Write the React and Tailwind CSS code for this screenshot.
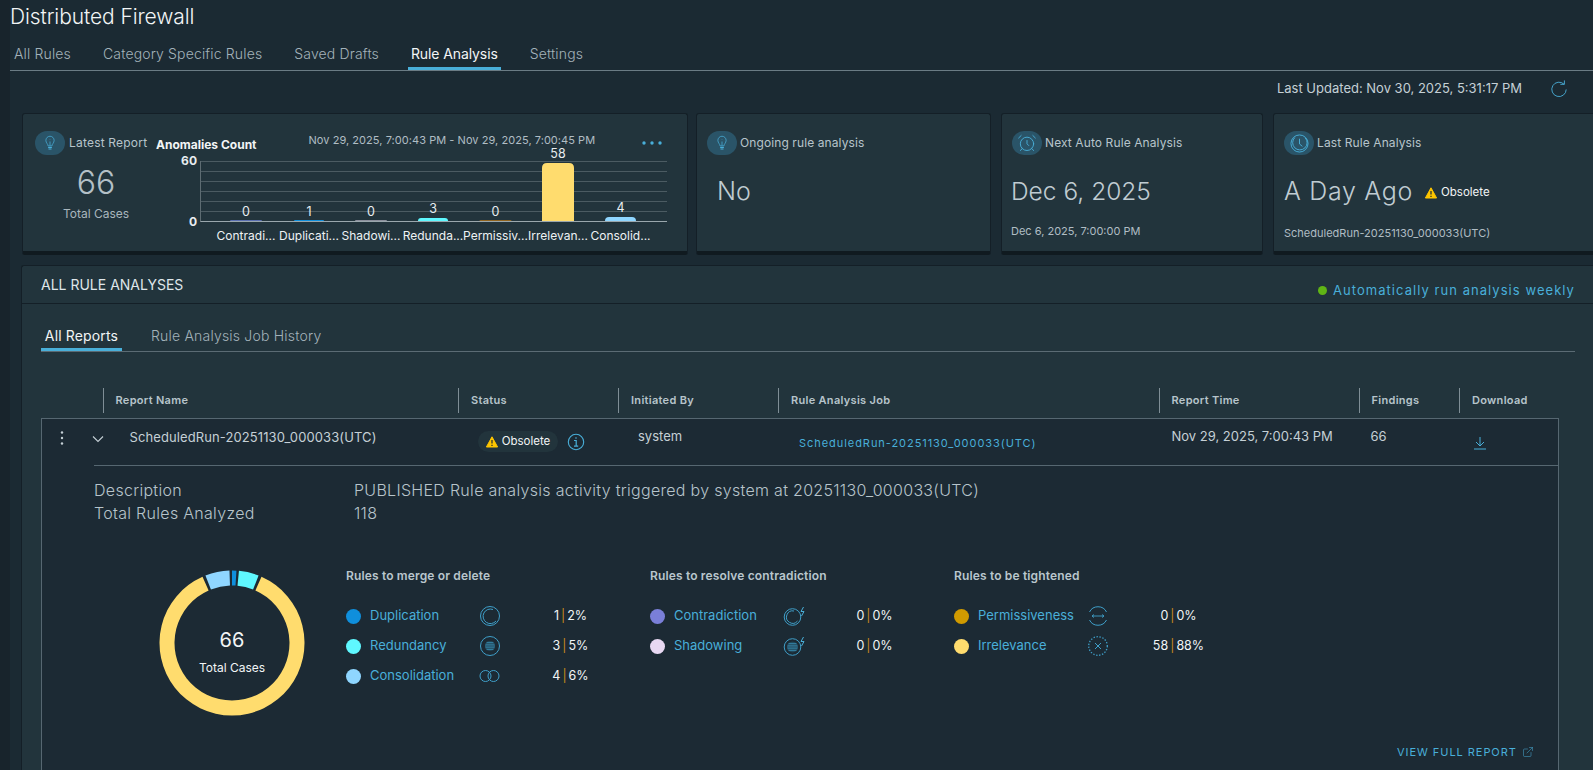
import React from 'react';
import { AlarmClock, ExternalLink } from 'lucide-react';

const BLUE = '#49afd9';

function Bulb({ className = '' }) {
  return (
    <svg viewBox="0 0 16 20" className={className} fill="none" stroke="currentColor" strokeWidth="1">
      <path d="M5.5 14 C5.5 11.5 2.5 10 2.5 6.5 A5.5 5.5 0 0 1 13.5 6.5 C13.5 10 10.5 11.5 10.5 14 Z" />
      <path d="M8 14 V8 M8 5.5 V6" />
      <path d="M5.5 16 H10.5 M6 18 H10" strokeWidth="1.6" />
    </svg>
  );
}
function ClockIcon({ className = '' }) {
  return (
    <svg viewBox="0 0 20 20" className={className} fill="none" stroke="currentColor" strokeWidth="1">
      <circle cx="10" cy="10" r="9" />
      <path d="M5 3.8 A7.6 7.6 0 1 0 16 4" />
      <path d="M10 5 V10.5 L13 13" />
    </svg>
  );
}
function IconBubble({ children }) {
  return (
    <div className="w-[30px] h-[24px] rounded-full bg-[#2a5468] flex items-center justify-center text-[#49afd9] shrink-0">
      {children}
    </div>
  );
}
function Warn({ className = '' }) {
  return (
    <svg viewBox="0 0 12 12" className={className}>
      <path d="M6 .8 L11.6 11 H.4 Z" fill="#fdc500" stroke="#fdc500" strokeLinejoin="round" />
      <path d="M6 4 V7.6 M6 8.8 V10" stroke="#1b2832" strokeWidth="1.2" />
    </svg>
  );
}

function Chart() {
  const cats = [
    ['Contradi...', 246, 0, '0', '#5a6fb0', 32],
    ['Duplicati...', 309, 1, '1', '#0f8fdc', 30],
    ['Shadowi...', 371, 0, '0', '#8b8f9c', 32],
    ['Redunda...', 433, 3, '3', '#5ff8ff', 30],
    ['Permissiv...', 495.5, 0, '0', '#8f6420', 32],
    ['Irrelevan...', 558, 58, '58', '#ffdc6e', 32],
    ['Consolid...', 620.5, 4, '4', '#8fd6ff', 31],
  ];
  return (
    <svg viewBox="155 138 530 107" className="w-[530px] h-[107px] block -mt-[12px]" fontFamily="Inter, sans-serif">
      {[161.5, 171.5, 181.5, 191.5, 201.5, 211.5].map((y) => (
        <line key={y} x1="200.5" x2="667" y1={y} y2={y} stroke="#4b5b62" strokeWidth="1" />
      ))}
      <line x1="200.5" x2="200.5" y1="161" y2="222" stroke="#5d6c72" strokeWidth="1" />
      <text x="197" y="165" textAnchor="end" fontSize="12" fontWeight="700" fill="#e8edf0">60</text>
      <text x="197" y="225.5" textAnchor="end" fontSize="12" fontWeight="700" fill="#e8edf0">0</text>
      {cats.map(([label, cx, v, t, color, w]) => {
        const h = Math.max(v, 1);
        const top = 221 - h;
        const r = Math.min(5, h);
        return (
          <g key={label}>
            <path
              d={`M${cx - w / 2} 221 V${top + r} Q${cx - w / 2} ${top} ${cx - w / 2 + r} ${top} H${cx + w / 2 - r} Q${cx + w / 2} ${top} ${cx + w / 2} ${top + r} V221 Z`}
              fill={color}
            />
            <text x={cx} y={v > 1 ? top - 5 : 216} textAnchor="middle" fontSize="12.5" fill="#e8edf0">{t}</text>
            <text x={cx} y="239.5" textAnchor="middle" fontSize="12" fill="#eef2f4">{label}</text>
          </g>
        );
      })}
      <line x1="200.5" x2="667" y1="221.5" y2="221.5" stroke="#9aa7ad" strokeWidth="1" />
    </svg>
  );
}

function arc(cx, cy, r0, r1, a0, a1) {
  const p = (r, a) => {
    const t = (a * Math.PI) / 180;
    return `${(cx + r * Math.sin(t)).toFixed(2)} ${(cy - r * Math.cos(t)).toFixed(2)}`;
  };
  const large = a1 - a0 > 180 ? 1 : 0;
  return `M${p(r1, a0)} A${r1} ${r1} 0 ${large} 1 ${p(r1, a1)} L${p(r0, a1)} A${r0} ${r0} 0 ${large} 0 ${p(r0, a0)} Z`;
}

function Donut() {
  const segs = [
    [0, 3.5, '#0f8fdc'],
    [5.5, 21.5, '#5ff8ff'],
    [24, 336, '#ffdc6e'],
    [338.5, 358, '#8fd6ff'],
  ];
  return (
    <svg viewBox="0 0 150 150" className="w-[150px] h-[150px] shrink-0">
      {segs.map(([a, b, c]) => (
        <path key={a} d={arc(75, 75, 57.5, 72.5, a, b)} fill={c} />
      ))}
    </svg>
  );
}

const st = { fill: 'none', stroke: '#3f9fc9', strokeWidth: 1 };
function LegendIcon({ kind }) {
  const hatch = (cx, cy, r) => (
    <g>
      <circle cx={cx} cy={cy} r={r} fill="#1f4152" stroke="none" />
      {[-3.6, -1.8, 0, 1.8, 3.6].map((d) => (
        <line key={d} x1={cx - Math.sqrt(r * r - d * d)} x2={cx + Math.sqrt(r * r - d * d)} y1={cy + d} y2={cy + d} stroke="#3f9fc9" strokeWidth="0.7" />
      ))}
    </g>
  );
  const bolt = <path d="M21.5 1 L19 5.5 H22 L19.5 10" fill="none" stroke="#49afd9" strokeWidth="1" />;
  return (
    <svg viewBox="0 0 24 20" className="w-[24px] h-[20px] block" {...st}>
      {kind === 'dup' && (<><circle cx="12" cy="10" r="9.5" /><path d="M15 3.5 A7.3 7.3 0 1 0 18 15" /></>)}
      {kind === 'red' && (<><circle cx="12" cy="10" r="9.5" />{hatch(12, 10, 5)}</>)}
      {kind === 'con' && (<><circle cx="7.5" cy="10" r="5.5" /><circle cx="15.5" cy="10" r="5.5" /></>)}
      {kind === 'ctr' && (<><circle cx="10.5" cy="11" r="8.3" /><path d="M12 5 A6.2 6.2 0 1 0 15.5 15" />{bolt}</>)}
      {kind === 'sha' && (<><circle cx="10.5" cy="11" r="8.3" />{hatch(10.5, 11, 5.4)}{bolt}</>)}
      {kind === 'per' && (
        <>
          <path d="M3.5 6 A9.5 9.5 0 0 1 20.5 6" />
          <path d="M3.5 14 A9.5 9.5 0 0 0 20.5 14" />
          <path d="M6 10 H18 M8 8.5 L6 10 L8 11.5 M16 8.5 L18 10 L16 11.5" strokeWidth="0.9" />
        </>
      )}
      {kind === 'irr' && (
        <>
          <circle cx="12" cy="10" r="9.3" strokeDasharray="1.4 1.6" strokeWidth="1.3" />
          <path d="M9 7 L15 13 M15 7 L9 13" />
        </>
      )}
    </svg>
  );
}

function Legend({ title, items }) {
  return (
    <div className="w-[304px] shrink-0">
      <div className="text-[12px] font-semibold leading-[16px] text-[#b9c6cd] tracking-[0.15px] h-[33px]">{title}</div>
      {items.map(([label, color, icon, val]) => (
        <div key={label} className="flex items-center h-[30px]">
          <span className="w-[15px] h-[15px] rounded-full shrink-0" style={{ background: color }} />
          <span className="ml-[9px] w-[108px] text-[13px] text-[#49afd9] whitespace-nowrap">{label}</span>
          <span className="w-[24px] shrink-0"><LegendIcon kind={icon} /></span>
          <span className="w-[137px] text-center text-[12.5px] text-[#f1f5f6] whitespace-nowrap">
            {val[0]}<span className="text-[#c98a1b] mx-[2px]">|</span>{val[1]}
          </span>
        </div>
      ))}
    </div>
  );
}

const cols = 'grid grid-cols-[61.5px_355.5px_160px_160px_380.5px_200px_100.5px_100px]';
const heads = ['Report Name', 'Status', 'Initiated By', 'Rule Analysis Job', 'Report Time', 'Findings', 'Download'];

function SmallCard({ w, icon, label, children }) {
  return (
    <div className={`${w} shrink-0 h-[142px] bg-[#22343c] border border-[#141f27] border-b-[4px] border-b-[#101a20] rounded-[3px] pt-[17px]`}>
      <div className="flex items-center pl-[10px] gap-[3px] text-[12px] text-[#b7c4cb] tracking-[0.1px] h-[24px]">
        <IconBubble>{icon}</IconBubble>
        <span className="whitespace-nowrap">{label}</span>
      </div>
      {children}
    </div>
  );
}

export default function App() {
  return (
    <div className="w-[1593px] h-[770px] overflow-hidden bg-[linear-gradient(90deg,#18242c_10px,#1b2a33_10px)] text-[#c5d0d6] font-['Inter','Noto_Sans',sans-serif]">
      <div className="pl-[10px] h-[37px] pt-[3px] text-[21px] leading-[28px] font-light text-[#f2f5f6] tracking-[-0.1px]">Distributed Firewall</div>

      <div className="ml-[10px] h-[34px] border-b border-[#6b7c85] flex items-end gap-[26px] pl-[1px] text-[14px]">
        {['All Rules', 'Category Specific Rules', 'Saved Drafts', 'Rule Analysis', 'Settings'].map((t) => (
          <div
            key={t}
            className={
              t === 'Rule Analysis'
                ? 'px-[3px] h-[33px] pt-[2px] flex items-center border-b-[3px] border-[#49afd9] text-[#f2f5f6] tracking-[-0.1px] whitespace-nowrap'
                : 'px-[3px] h-[33px] pt-[2px] flex items-center border-b-[3px] border-transparent text-[#a3b2ba] font-light tracking-[0.15px] whitespace-nowrap'
            }
          >
            {t}
          </div>
        ))}
      </div>

      <div className="h-[42px] flex items-center justify-end pr-[25px] text-[13px] text-[#c5d0d6]">
        <span className="pb-[6px] flex items-center">
          Last Updated: Nov 30, 2025, 5:31:17 PM
          <svg viewBox="0 0 20 20" className="w-[18px] h-[18px] ml-[28px]" fill="none" stroke={BLUE} strokeWidth="1">
            <path d="M15.7 4.8 A8 8 0 1 0 18 10.5" />
            <path d="M16 0.5 V4.8 H11.5" />
          </svg>
        </span>
      </div>

      <div className="flex gap-[10px] ml-[22px] w-[1600px]">
        <div className="w-[666px] mr-[-2px] shrink-0 h-[142px] bg-[#22343c] border border-[#141f27] border-b-[4px] border-b-[#101a20] rounded-[3px] flex relative">
          <div className="w-[133px] shrink-0 pt-[17px]">
            <div className="flex items-center pl-[12px] gap-[4px] text-[12px] text-[#b7c4cb] tracking-[0.2px] h-[24px] whitespace-nowrap">
              <IconBubble><Bulb className="w-[12px] h-[18px]" /></IconBubble>
              <span>Latest Report</span>
            </div>
            <div className="text-[32px] font-light text-[#b4c0c7] text-center leading-[40px] mt-[8px] pl-[13px]">66</div>
            <div className="text-[12px] text-[#a9b6bd] text-center leading-[16px] mt-[3px] pl-[13px]">Total Cases</div>
          </div>
          <div className="flex-1 min-w-0">
            <div className="h-[36px] relative flex">
              <div className="text-[12px] font-bold text-[#f2f5f6] mt-[23px] leading-[16px] whitespace-nowrap">Anomalies Count</div>
              <div className="text-[11px] text-[#b0bdc4] tracking-[0.05px] mt-[18px] ml-[52px] leading-[16px] whitespace-nowrap">Nov 29, 2025, 7:00:43 PM - Nov 29, 2025, 7:00:45 PM</div>
              <svg viewBox="0 0 20 4" className="absolute left-[486px] top-[27px] w-[20px] h-[4px]" fill={BLUE}>
                <circle cx="2" cy="2" r="1.7" /><circle cx="10" cy="2" r="1.7" /><circle cx="18" cy="2" r="1.7" />
              </svg>
            </div>
            <div className="-ml-[1px]"><Chart /></div>
          </div>
        </div>

        <SmallCard w="w-[295px]" icon={<Bulb className="w-[12px] h-[18px]" />} label="Ongoing rule analysis">
          <div className="text-[25px] font-light text-[#c0ccd2] pl-[20px] leading-[32px] mt-[20px]">No</div>
        </SmallCard>

        <SmallCard w="w-[262px]" icon={<AlarmClock size={20} strokeWidth={1.1} />} label="Next Auto Rule Analysis">
          <div className="text-[24.5px] font-light text-[#c0ccd2] pl-[9px] leading-[32px] mt-[20px]">Dec 6, 2025</div>
          <div className="text-[11px] text-[#b0bdc4] pl-[9px] leading-[16px] mt-[16px]">Dec 6, 2025, 7:00:00 PM</div>
        </SmallCard>

        <SmallCard w="w-[340px]" icon={<ClockIcon className="w-[19px] h-[19px]" />} label="Last Rule Analysis">
          <div className="flex items-center pl-[10px] mt-[20px] h-[32px]">
            <span className="text-[25px] font-light text-[#c0ccd2] tracking-[0.7px] leading-[32px] whitespace-nowrap">A Day Ago</span>
            <Warn className="w-[12px] h-[12px] ml-[12px] mt-[4px]" />
            <span className="text-[11.5px] text-[#f2f5f6] ml-[4px] mt-[4px]">Obsolete</span>
          </div>
          <div className="text-[11px] text-[#b0bdc4] pl-[10px] leading-[16px] mt-[18px] whitespace-nowrap">ScheduledRun-20251130_000033(UTC)</div>
        </SmallCard>
      </div>

      <div className="mt-[10px] ml-[21px] w-[1600px] border-t border-l border-[#141f27] rounded-t-[3px] bg-[#22343c] h-[520px]">
        <div className="h-[38px] border-b border-[#141f27] flex items-center pl-[19px] relative">
          <span className="text-[14px] text-[#dfe6ea]">ALL RULE ANALYSES</span>
          <div className="absolute left-[1296px] top-[16px] flex items-center gap-[6px] whitespace-nowrap">
            <span className="w-[9px] h-[9px] rounded-full bg-[#60b515]" />
            <span className="text-[13px] text-[#49afd9] tracking-[1.05px] leading-[16px]">Automatically run analysis weekly</span>
          </div>
        </div>

        <div className="ml-[19px] h-[48px] border-b border-[#5b6b74] w-[1534px] flex items-end text-[14px]">
          <div className="h-[33px] border-b-[3px] border-[#49afd9] text-[#f2f5f6] tracking-[0.15px] whitespace-nowrap w-[81px] text-center leading-[36px]">All Reports</div>
          <div className="ml-[29px] h-[33px] text-[#a3b2ba] font-light tracking-[0.2px] whitespace-nowrap leading-[36px]">Rule Analysis Job History</div>
        </div>

        <div className={`${cols} ml-[19px] mt-[36px] h-[30px] w-[1518px]`}>
          <div />
          {heads.map((h) => (
            <div key={h} className="border-l border-[#7f8e96] h-[25px] pl-[12px] flex items-center text-[11px] font-semibold text-[#b7c4cb] tracking-[0.3px] whitespace-nowrap">{h}</div>
          ))}
        </div>

        <div className="ml-[19px] w-[1518px] border border-[#566771] bg-[#1c2a34] h-[400px]">
          <div className={`${cols} h-[46px] text-[13px] text-[#c5d0d6] relative`}>
            <div className="flex items-start pl-[18px] pt-[11px] gap-[28px]">
              <svg viewBox="0 0 4 16" className="w-[4px] h-[16px] shrink-0" fill="#c5d0d6">
                <circle cx="2" cy="2.5" r="1.2" /><circle cx="2" cy="8" r="1.2" /><circle cx="2" cy="13.5" r="1.2" />
              </svg>
              <svg viewBox="0 0 12 8" className="w-[12px] h-[8px] mt-[5px] shrink-0" fill="none" stroke="#c5d0d6" strokeWidth="1.1">
                <path d="M1 1.5 L6 6.5 L11 1.5" />
              </svg>
            </div>
            <div className="pl-[26px] pt-[9px] leading-[18px] tracking-[0.1px] whitespace-nowrap">ScheduledRun-20251130_000033(UTC)</div>
            <div className="pl-[19px] pt-[12px] flex items-start">
              <div className="h-[21px] w-[80px] rounded-full bg-[#22343c] flex items-center justify-center gap-[4px] text-[11.5px] text-[#f2f5f6]">
                <Warn className="w-[12px] h-[12px]" />
                <span>Obsolete</span>
              </div>
              <svg viewBox="0 0 18 18" className="w-[18px] h-[18px] ml-[9px] mt-[2px]" fill="none" stroke={BLUE}>
                <circle cx="9" cy="9" r="7.7" strokeWidth="1.1" />
                <path d="M7 7.5 H9.2 V13 M7 13.2 H11.2 M9 4.2 V5.8" strokeWidth="1.2" />
              </svg>
            </div>
            <div className="pl-[19px] pt-[8px] leading-[18px]">system</div>
            <div className="pl-[20px] pt-[15px] leading-[18px] text-[11px] text-[#49afd9] tracking-[0.95px] whitespace-nowrap">ScheduledRun-20251130_000033(UTC)</div>
            <div className="pl-[12px] pt-[8px] leading-[18px] whitespace-nowrap">Nov 29, 2025, 7:00:43 PM</div>
            <div className="pl-[11px] pt-[8px] leading-[18px]">66</div>
            <div className="pl-[13px] pt-[17px]">
              <svg viewBox="0 0 14 14" className="w-[14px] h-[14px]" fill="none" stroke={BLUE}>
                <path d="M7 1 V10 M3 6 L7 10 L11 6 M1 13 H13" strokeWidth="1" />
              </svg>
            </div>
          </div>
          <div className="ml-[52px] border-t border-[#566771] pt-[13px] text-[16px] font-light text-[#b7c4cb] tracking-[0.3px] leading-[23px]">
            <div className="flex"><span className="w-[260px] shrink-0">Description</span><span className="whitespace-nowrap">PUBLISHED Rule analysis activity triggered by system at 20251130_000033(UTC)</span></div>
            <div className="flex"><span className="w-[260px] shrink-0">Total Rules Analyzed</span><span>118</span></div>
          </div>

          <div className="flex mt-[43px] pl-[115px] relative">
            <div className="relative w-[150px] h-[150px] shrink-0">
              <Donut />
              <div className="absolute inset-0 flex flex-col items-center text-center">
                <div className="text-[20px] text-[#f2f5f6] mt-[58px] leading-[28px]">66</div>
                <div className="text-[12px] text-[#f2f5f6] mt-[6px] leading-[16px]">Total Cases</div>
              </div>
            </div>
            <div className="ml-[39px] flex">
              <Legend
                title="Rules to merge or delete"
                items={[
                  ['Duplication', '#0f8fdc', 'dup', ['1', '2%']],
                  ['Redundancy', '#5ff8ff', 'red', ['3', '5%']],
                  ['Consolidation', '#8fd6ff', 'con', ['4', '6%']],
                ]}
              />
              <Legend
                title="Rules to resolve contradiction"
                items={[
                  ['Contradiction', '#7a7fd8', 'ctr', ['0', '0%']],
                  ['Shadowing', '#e8d8f2', 'sha', ['0', '0%']],
                ]}
              />
              <Legend
                title="Rules to be tightened"
                items={[
                  ['Permissiveness', '#d09a00', 'per', ['0', '0%']],
                  ['Irrelevance', '#ffdc6e', 'irr', ['58', '88%']],
                ]}
              />
            </div>
            <div className="absolute left-[1355px] top-[176px] flex items-center gap-[5px] text-[11px] tracking-[0.95px] text-[#49afd9] whitespace-nowrap">
              VIEW FULL REPORT
              <ExternalLink size={12} strokeWidth={1} />
            </div>
          </div>
        </div>
      </div>
    </div>
  );
}
